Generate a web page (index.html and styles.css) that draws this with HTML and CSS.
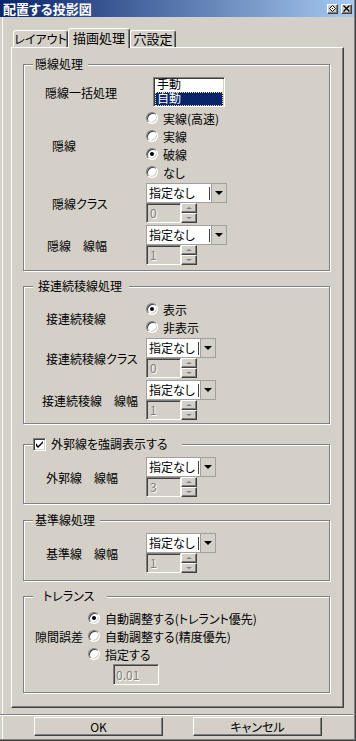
FILE: index.html
```html
<!DOCTYPE html>
<html lang="ja">
<head>
    <meta charset="UTF-8">
    <meta name="viewport" content="width=device-width, initial-scale=1.0">
    <title>配置する投影図</title>
    <link rel="stylesheet" href="styles.css">
</head>
<body>
    <div class="window">
        <!-- Title bar -->
        <div class="titlebar">
            <span class="title">配置する投影図</span>
            <div class="caption-buttons">
                <span class="cap-btn">
                    <svg width="7" height="7" viewBox="0 0 7 7"><polygon points="3.5,0.5 6.5,3.5 3.5,6.5 0.5,3.5" fill="#fff" stroke="#000" stroke-width="1"/><rect x="3" y="3" width="1" height="1" fill="#000"/></svg>
                </span>
                <span class="cap-btn">
                    <svg width="7" height="7" viewBox="0 0 7 7"><path d="M0.5 0.5 L6.5 6.5 M6.5 0.5 L0.5 6.5" stroke="#000" stroke-width="1.3"/></svg>
                </span>
            </div>
        </div>

        <!-- Tabs -->
        <div class="tabstrip">
            <div class="tab tab-layout">レイアウト</div>
            <div class="tab tab-active">描画処理</div>
            <div class="tab tab-hole">穴設定</div>
        </div>

        <div class="panel">
            <!-- 隠線処理 -->
            <div class="group">
                <div class="group-title">隠線処理</div>
                <div class="row mt6">
                    <span class="label pad21">隠線一括処理</span>
                    <div class="listbox">
                        <div class="list-item">手動</div>
                        <div class="list-item selected">自動</div>
                    </div>
                </div>
                <div class="row mt2">
                    <span class="label pad28">隠線</span>
                    <div class="radios">
                        <div class="radio-item"><span class="radio"></span>実線(高速)</div>
                        <div class="radio-item"><span class="radio"></span>実線</div>
                        <div class="radio-item"><span class="radio on"></span>破線</div>
                        <div class="radio-item"><span class="radio"></span>なし</div>
                    </div>
                </div>
                <div class="row mt2">
                    <span class="label pad28">隠線クラス</span>
                    <div class="pair">
                        <div class="combo wide"><span class="combo-text">指定なし</span><span class="caret"></span><span class="drop"></span></div>
                        <div class="spin"><span class="spin-edit">0</span><span class="spin-btns"><span class="spin-btn up"></span><span class="spin-btn down"></span></span></div>
                    </div>
                </div>
                <div class="row mt2">
                    <span class="label pad23">隠線　線幅</span>
                    <div class="pair">
                        <div class="combo wide"><span class="combo-text">指定なし</span><span class="caret"></span><span class="drop"></span></div>
                        <div class="spin"><span class="spin-edit">1</span><span class="spin-btns"><span class="spin-btn up"></span><span class="spin-btn down"></span></span></div>
                    </div>
                </div>
            </div>

            <!-- 接連続稜線処理 -->
            <div class="group group-edge">
                <div class="group-title title-edge">接連続稜線処理</div>
                <div class="row mt7">
                    <span class="label pad22">接連続稜線</span>
                    <div class="radios">
                        <div class="radio-item"><span class="radio on"></span>表示</div>
                        <div class="radio-item"><span class="radio"></span>非表示</div>
                    </div>
                </div>
                <div class="row mt2">
                    <span class="label pad22">接連続稜線クラス</span>
                    <div class="pair">
                        <div class="combo"><span class="combo-text">指定なし</span><span class="caret"></span><span class="drop"></span></div>
                        <div class="spin"><span class="spin-edit">0</span><span class="spin-btns"><span class="spin-btn up"></span><span class="spin-btn down"></span></span></div>
                    </div>
                </div>
                <div class="row mt2">
                    <span class="label pad18">接連続稜線　線幅</span>
                    <div class="pair">
                        <div class="combo"><span class="combo-text">指定なし</span><span class="caret"></span><span class="drop"></span></div>
                        <div class="spin"><span class="spin-edit">1</span><span class="spin-btns"><span class="spin-btn up"></span><span class="spin-btn down"></span></span></div>
                    </div>
                </div>
            </div>

            <!-- 外郭線 -->
            <div class="group group-outline">
                <div class="group-title title-check">
                    <span class="checkbox">
                        <svg width="7" height="7" viewBox="0 0 7 7"><path d="M0 2 L0 5 L2 7 L7 2 L7 0 L2 5 Z" fill="#000"/></svg>
                    </span>
                    外郭線を強調表示する
                </div>
                <div class="row mt6">
                    <span class="label pad22">外郭線　線幅</span>
                    <div class="pair">
                        <div class="combo"><span class="combo-text">指定なし</span><span class="caret"></span><span class="drop"></span></div>
                        <div class="spin"><span class="spin-edit">3</span><span class="spin-btns"><span class="spin-btn up"></span><span class="spin-btn down"></span></span></div>
                    </div>
                </div>
            </div>

            <!-- 基準線処理 -->
            <div class="group group-base">
                <div class="group-title">基準線処理</div>
                <div class="row mt6">
                    <span class="label pad22">基準線　線幅</span>
                    <div class="pair">
                        <div class="combo"><span class="combo-text">指定なし</span><span class="caret"></span><span class="drop"></span></div>
                        <div class="spin"><span class="spin-edit">1</span><span class="spin-btns"><span class="spin-btn up"></span><span class="spin-btn down"></span></span></div>
                    </div>
                </div>
            </div>

            <!-- トレランス -->
            <div class="group group-tol">
                <div class="group-title title-tol">トレランス</div>
                <div class="row mt6">
                    <span class="label-tol">隙間誤差</span>
                    <div class="radios">
                        <div class="radio-item"><span class="radio on"></span>自動調整する(トレラント優先)</div>
                        <div class="radio-item"><span class="radio"></span>自動調整する(精度優先)</div>
                        <div class="radio-item"><span class="radio"></span>指定する</div>
                    </div>
                </div>
                <div class="tol-edit">0.01</div>
            </div>
        </div>

        <div class="separator"></div>
        <div class="buttons">
            <div class="btn">OK</div>
            <div class="btn">キャンセル</div>
        </div>
    </div>
</body>
</html>
```

FILE: styles.css
```css
* {
    box-sizing: border-box;
}
body {
    margin: 0;
    font-family: "Noto Sans CJK JP", "Liberation Sans", sans-serif;
    font-size: 12px;
    font-feature-settings: "palt";
    color: #000;
    background: #d4d0c8;
}
.window {
    width: 356px;
    height: 741px;
    background: #d4d0c8;
    border-right: 1px solid #404040;
    border-bottom: 1px solid #404040;
    box-shadow: inset -1px -1px 0 #808080, inset 2px 0 0 #d4d0c8, inset 3px 0 0 #fff;
    display: flex;
    flex-direction: column;
    overflow: hidden;
}

/* title bar */
.titlebar {
    height: 17px;
    margin-right: 1px;
    padding: 0 2px 0 3px;
    display: flex;
    align-items: center;
    justify-content: space-between;
    background: linear-gradient(to right, #0a246a, #a6caf0);
}
.title {
    color: #fff;
    font-weight: bold;
    font-size: 13px;
    line-height: 17px;
}
.caption-buttons {
    display: flex;
    gap: 3px;
}
.cap-btn {
    width: 11px;
    height: 10px;
    display: flex;
    align-items: center;
    justify-content: center;
    background: #d4d0c8;
    border: 1px solid;
    border-color: #fff #404040 #404040 #fff;
    box-shadow: inset -1px -1px 0 #808080;
}

/* tabs */
.tabstrip {
    margin-top: 11px;
    height: 19px;
    padding-left: 13px;
    display: flex;
    align-items: flex-end;
}
.tab {
    height: 17px;
    border: 1px solid;
    border-bottom: none;
    border-color: #fff #404040 transparent #fff;
    border-radius: 3px 3px 0 0;
    box-shadow: inset -1px 0 0 #808080;
    display: flex;
    align-items: center;
    justify-content: center;
    background: #d4d0c8;
    line-height: 14px;
    white-space: nowrap;
}
.tab-layout {
    width: 55px;
}
.tab-active {
    width: 62px;
    height: 20px;
    margin-bottom: -1px;
    padding-bottom: 2px;
    position: relative;
    z-index: 1;
    font-size: 13px;
}
.tab-hole {
    width: 46px;
    font-size: 13px;
}

.panel {
    width: 333px;
    height: 661px;
    margin-left: 11px;
    padding: 16px 0 0 11px;
    border: 1px solid;
    border-color: #fff #404040 #404040 #fff;
    box-shadow: inset -1px -1px 0 #808080;
}

/* group boxes */
.group {
    width: 307px;
    border: 1px solid #808080;
    box-shadow: 1px 1px 0 #fff, inset 1px 1px 0 #fff;
    padding-bottom: 5px;
}
.group-title {
    width: fit-content;
    height: 14px;
    line-height: 14px;
    margin: -8px 0 0 9px;
    padding: 0 5px 0 2px;
    background: #d4d0c8;
    white-space: nowrap;
}
.group-edge {
    margin-top: 15px;
    padding-bottom: 3px;
}
.title-edge {
    padding: 0 7px 0 5px;
}
.group-outline {
    margin-top: 20px;
    padding-bottom: 6px;
}
.title-check {
    display: flex;
    align-items: center;
    gap: 5px;
    padding: 0 14px 0 0;
}
.group-base {
    margin-top: 16px;
    padding-bottom: 7px;
}
.group-tol {
    margin-top: 15px;
    padding-bottom: 7px;
}
.title-tol {
    padding: 0 13px 0 10px;
}

.row {
    display: flex;
    align-items: center;
}
.mt2 { margin-top: 2px; }
.mt3 { margin-top: 3px; }
.mt6 { margin-top: 6px; }
.mt7 { margin-top: 7px; }

.label {
    width: 122px;
    flex: none;
    white-space: nowrap;
}
.pad18 { padding-left: 18px; }
.pad21 { padding-left: 21px; }
.pad22 { padding-left: 22px; }
.pad23 { padding-left: 23px; }
.pad28 { padding-left: 28px; }

/* list box */
.listbox {
    width: 72px;
    height: 30px;
    margin-left: 7px;
    background: #fff;
    border: 1px solid;
    border-color: #808080 #fff #fff #808080;
    box-shadow: inset 1px 1px 0 #404040, inset -1px -1px 0 #d4d0c8;
    padding: 0 1px;
    font-family: "Liberation Sans", "Noto Sans CJK JP", sans-serif;
}
.list-item {
    height: 14px;
    line-height: 14px;
    padding-left: 2px;
}
.list-item.selected {
    background: #0a246a;
    color: #fff;
    outline: 1px dotted #f0e6a0;
    outline-offset: -1px;
}

/* radio buttons */
.radios {
    display: flex;
    flex-direction: column;
}
.radio-item {
    height: 18px;
    display: flex;
    align-items: center;
    gap: 5px;
    white-space: nowrap;
}
.radio {
    width: 12px;
    height: 12px;
    flex: none;
    border-radius: 50%;
    background: #fff;
    border: 1px solid;
    border-color: #808080 #fff #fff #808080;
    box-shadow: inset 1px 1px 0 #404040, inset -1px -1px 0 #d4d0c8;
    display: flex;
    align-items: center;
    justify-content: center;
}
.radio.on::after {
    content: "";
    width: 4px;
    height: 4px;
    border-radius: 50%;
    background: #000;
}

/* check box */
.checkbox {
    width: 13px;
    height: 13px;
    background: #fff;
    border: 1px solid;
    border-color: #808080 #fff #fff #808080;
    box-shadow: inset 1px 1px 0 #404040, inset -1px -1px 0 #d4d0c8;
    display: flex;
    align-items: center;
    justify-content: center;
}

/* combo + spin */
.pair {
    display: flex;
    flex-direction: column;
}
.combo {
    width: 70px;
    height: 20px;
    display: flex;
    align-items: center;
    background: #fff;
    border: 1px solid #a0a0a0;
}
.combo.wide {
    width: 81px;
}
.combo-text {
    flex: 1;
    padding-left: 2px;
    line-height: 18px;
    white-space: nowrap;
}
.caret {
    width: 1px;
    height: 13px;
    margin-right: 1px;
    background: #404040;
}
.drop {
    width: 15px;
    height: 18px;
    flex: none;
    background: #d4d0c8;
    border-left: 1px solid #a0a0a0;
    display: flex;
    align-items: center;
    justify-content: center;
}
.drop::after {
    content: "";
    border-left: 4px solid transparent;
    border-right: 4px solid transparent;
    border-top: 4px solid #000;
}
.spin {
    height: 20px;
    display: flex;
}
.spin-edit,
.tol-edit {
    background: #d4d0c8;
    border: 1px solid;
    border-color: #808080 #fff #fff #808080;
    box-shadow: inset 1px 1px 0 #404040, inset -1px -1px 0 #d4d0c8;
    color: #808080;
    text-shadow: 1px 1px 0 #fff;
    padding-left: 3px;
    line-height: 18px;
}
.spin-edit {
    width: 35px;
}
.spin-btns {
    width: 16px;
    display: flex;
    flex-direction: column;
}
.spin-btn {
    height: 10px;
    background: #d4d0c8;
    border: 1px solid;
    border-color: #fff #404040 #404040 #fff;
    box-shadow: inset -1px -1px 0 #808080;
    display: flex;
    align-items: center;
    justify-content: center;
}
.spin-btn.up::after {
    content: "";
    border-left: 3px solid transparent;
    border-right: 3px solid transparent;
    border-bottom: 2px solid #808080;
}
.spin-btn.down::after {
    content: "";
    border-left: 3px solid transparent;
    border-right: 3px solid transparent;
    border-top: 2px solid #808080;
}

.label-tol {
    padding-left: 11px;
    margin-right: 5px;
    white-space: nowrap;
}
.tol-edit {
    width: 46px;
    height: 21px;
    margin: 1px 0 0 89px;
    padding-left: 2px;
    line-height: 19px;
}

/* bottom buttons */
.separator {
    width: 353px;
    height: 2px;
    margin-top: 6px;
    border-top: 1px solid #808080;
    border-bottom: 1px solid #fff;
}
.buttons {
    margin-top: 1px;
    padding-left: 34px;
    display: flex;
    gap: 30px;
}
.btn {
    width: 129px;
    height: 19px;
    background: #d4d0c8;
    border: 1px solid;
    border-color: #fff #404040 #404040 #fff;
    box-shadow: inset -1px -1px 0 #808080;
    display: flex;
    align-items: center;
    justify-content: center;
    line-height: 14px;
}
```
